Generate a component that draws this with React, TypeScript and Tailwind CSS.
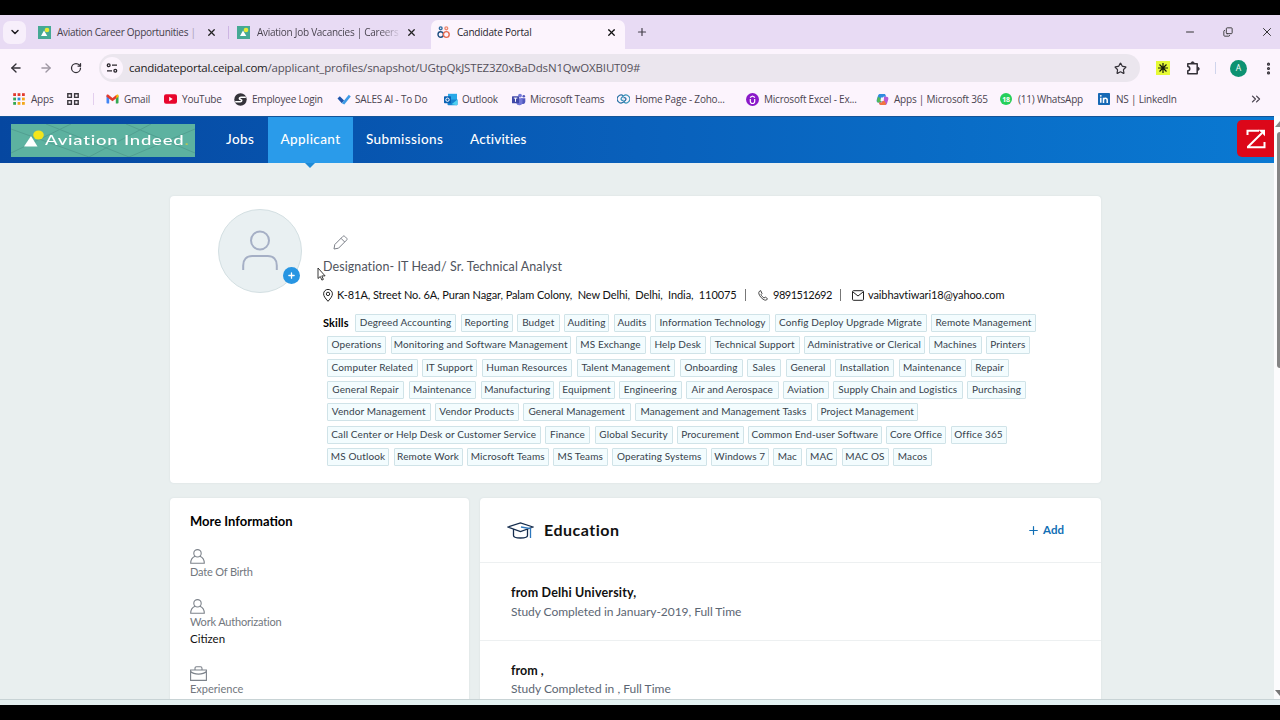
import type { ReactNode } from 'react';
import { ArrowLeft, ArrowRight, ChevronDown, ChevronsRight, Copy, Minus, MoreVertical, Plus, RotateCw, Star, X } from 'lucide-react';

interface Skill {
  name: string;
  width: number;
}

const skillRows: Skill[][] = [
  [
    { name: 'Degreed Accounting', width: 101 },
    { name: 'Reporting', width: 52 },
    { name: 'Budget', width: 42.5 },
    { name: 'Auditing', width: 45 },
    { name: 'Audits', width: 37 },
    { name: 'Information Technology', width: 115 },
    { name: 'Config Deploy Upgrade Migrate', width: 152 },
    { name: 'Remote Management', width: 105 },
  ],
  [
    { name: 'Operations', width: 59 },
    { name: 'Monitoring and Software Management', width: 180.5 },
    { name: 'MS Exchange', width: 70 },
    { name: 'Help Desk', width: 55.5 },
    { name: 'Technical Support', width: 89.5 },
    { name: 'Administrative or Clerical', width: 120.5 },
    { name: 'Machines', width: 52.5 },
    { name: 'Printers', width: 43.5 },
  ],
  [
    { name: 'Computer Related', width: 90.5 },
    { name: 'IT Support', width: 55 },
    { name: 'Human Resources', width: 90.5 },
    { name: 'Talent Management', width: 98.5 },
    { name: 'Onboarding', width: 63 },
    { name: 'Sales', width: 34 },
    { name: 'General', width: 45 },
    { name: 'Installation', width: 59 },
    { name: 'Maintenance', width: 67.5 },
    { name: 'Repair', width: 38 },
  ],
  [
    { name: 'General Repair', width: 77 },
    { name: 'Maintenance', width: 67.5 },
    { name: 'Manufacturing', width: 73.5 },
    { name: 'Equipment', width: 56 },
    { name: 'Engineering', width: 62.5 },
    { name: 'Air and Aerospace', width: 92.5 },
    { name: 'Aviation', width: 45.5 },
    { name: 'Supply Chain and Logistics', width: 129.5 },
    { name: 'Purchasing', width: 59 },
  ],
  [
    { name: 'Vendor Management', width: 103.5 },
    { name: 'Vendor Products', width: 83.5 },
    { name: 'General Management', width: 107.5 },
    { name: 'Management and Management Tasks', width: 177 },
    { name: 'Project Management', width: 101.5 },
  ],
  [
    { name: 'Call Center or Help Desk or Customer Service', width: 213.5 },
    { name: 'Finance', width: 45 },
    { name: 'Global Security', width: 78 },
    { name: 'Procurement', width: 66.5 },
    { name: 'Common End-user Software', width: 133.5 },
    { name: 'Core Office', width: 60 },
    { name: 'Office 365', width: 56 },
  ],
  [
    { name: 'MS Outlook', width: 62 },
    { name: 'Remote Work', width: 69 },
    { name: 'Microsoft Teams', width: 81.5 },
    { name: 'MS Teams', width: 54.5 },
    { name: 'Operating Systems', width: 94.5 },
    { name: 'Windows 7', width: 57.5 },
    { name: 'Mac', width: 28.5 },
    { name: 'MAC', width: 31 },
    { name: 'MAC OS', width: 47 },
    { name: 'Macos', width: 39 },
  ],
];

/* ---------- Browser icons ---------- */

function AviationFavicon() {
  return (
    <svg viewBox="0 0 13 13" className="size-[13px] shrink-0">
      <rect width="13" height="13" fill="#45a994" />
      <circle cx="9" cy="4" r="2.3" fill="#e6ea35" />
      <path d="M3 10 6 4.5 9.3 10Z" fill="#fff" />
    </svg>
  );
}

function CeipalFavicon() {
  return (
    <svg viewBox="0 0 13 13" className="size-[13px] shrink-0" fill="none" strokeWidth="1.4">
      <circle cx="3.7" cy="2.3" r="1.4" stroke="#2c6a9e" />
      <circle cx="3.7" cy="8.5" r="2.7" stroke="#1d4f80" />
      <circle cx="9.3" cy="2.3" r="1.4" stroke="#ee8a70" />
      <circle cx="9.3" cy="8.5" r="2.9" stroke="#e66a4e" />
    </svg>
  );
}

function TuneIcon() {
  return (
    <svg viewBox="0 0 12 12" className="size-3" fill="none" stroke="#28252b" strokeWidth="1.3">
      <circle cx="2.7" cy="3.2" r="1.4" />
      <path d="M6 3.2h5M1 8.8h5" />
      <circle cx="9.3" cy="8.8" r="1.4" />
    </svg>
  );
}

function ExtensionsIcon() {
  return (
    <svg viewBox="0 0 15 15" className="size-[15px]" fill="none" stroke="#333037" strokeWidth="1.5" strokeLinejoin="round">
      <path d="M1.8 2.8h9.4v9.900H1.800V9.800c2.600-.3 2.600-4 0-4.200Z" />
      <path d="M5 2.300a1.600 1.600 0 0 1 3.200 0ZM11.700 6.200a1.600 1.600 0 0 1 0 3.200Z" fill="#333037" strokeWidth=".8" />
    </svg>
  );
}

function AppsIcon() {
  const colors = ['#e23b2e', '#e23b2e', '#e23b2e', '#34a853', '#2f8fd8', '#f2a71b', '#34a853', '#f2a71b', '#f2a71b'];
  return (
    <svg viewBox="0 0 12 12" className="size-3">
      {colors.map((color, i) => (
        <rect key={i} x={(i % 3) * 4.4 + 0.2} y={Math.floor(i / 3) * 4.4 + 0.2} width="2.8" height="2.8" fill={color} />
      ))}
    </svg>
  );
}

function GridIcon() {
  return (
    <svg viewBox="0 0 12 12" className="size-3" fill="none" stroke="#3b383e" strokeWidth="1.4">
      <path d="M.8.8h3.6v3.6H.8zM7.6.8h3.6v3.6H7.6zM.8 7.6h3.6v3.6H.8zM7.6 7.6h3.6v3.6H7.6z" />
    </svg>
  );
}

function GmailIcon() {
  return (
    <svg viewBox="0 0 13 10" className="h-2.5 w-[13px]">
      <path d="M.5 1.5 3.2 3v6.5H1.3a.8.8 0 0 1-.8-.8Z" fill="#4285f4" />
      <path d="M12.5 1.5 9.8 3v6.5h1.900a.8.800 0 0 0 .8-.8Z" fill="#34a853" />
      <path d="M9.8 1.500 11 .6c.7-.5 1.500 0 1.500.9v1.200L9.800 4.700Z" fill="#fbbc04" />
      <path d="M.5 1.500C.5.600 1.400.100 2.100.600L6.500 3.900 10.300 1v3.300L6.500 7.200.5 2.700Z" fill="#e33b2e" />
    </svg>
  );
}

function YoutubeIcon() {
  return (
    <svg viewBox="0 0 13 10" className="h-2.5 w-[13px]">
      <rect width="13" height="9.6" y=".2" rx="2" fill="#e8062c" />
      <path d="m5.200 2.800 3.500 2.200-3.500 2.200Z" fill="#fff" />
    </svg>
  );
}

function EmployeeIcon() {
  return (
    <svg viewBox="0 0 13 13" className="size-[13px]">
      <circle cx="6.500" cy="6.500" r="6.200" fill="#35333a" />
      <path d="M11.800 4.300H7C5.200 4.300 4.700 6.200 6.500 6.500c1.900.3 1.700 2.300-.3 2.300H1.200" fill="none" stroke="#fff" strokeWidth="1.500" />
    </svg>
  );
}

function TodoIcon() {
  return (
    <svg viewBox="0 0 14 12" className="h-3 w-3.5">
      <path d="m.5 5.500 2.300-2.300 4.300 4.300-2.300 2.700Z" fill="#1f56ad" />
      <path d="m4.800 10.300 7-8.500 2 1.700-6.500 8Z" fill="#3d9be6" />
    </svg>
  );
}

function OutlookIcon() {
  return (
    <svg viewBox="0 0 14 13" className="h-[13px] w-3.5">
      <rect x="4" y=".8" width="9" height="6.500" fill="#28a8e8" />
      <path d="M3.500 6.500h10v4.800a.9.900 0 0 1-.9.900H4.400a.9.900 0 0 1-.9-.9Z" fill="#1684d0" />
      <path d="m13.500 6.500-6 4.800 5.300.9a.8.800 0 0 0 .7-.9Z" fill="#50d0f0" />
      <rect y="3.200" width="7" height="7" rx=".7" fill="#0b62b4" />
      <circle cx="3.500" cy="6.700" r="1.700" fill="none" stroke="#fff" strokeWidth="1" />
    </svg>
  );
}

function TeamsIcon() {
  return (
    <svg viewBox="0 0 14 13" className="h-[13px] w-3.5">
      <circle cx="8" cy="2.600" r="1.900" fill="#7278d8" />
      <circle cx="11.800" cy="3.300" r="1.300" fill="#5057bd" />
      <path d="M9 5.300h4.300v3.500a2.300 2.300 0 0 1-4.300 1Z" fill="#5057bd" />
      <path d="M4.200 5.300h6.300v4a3.200 3.200 0 0 1-6.300.6Z" fill="#7278d8" />
      <rect y="3.300" width="7" height="7" rx=".6" fill="#4048a8" />
      <path d="M1.800 5.100h3.500M3.500 5.100v3.700" stroke="#fff" />
    </svg>
  );
}

function ZohoIcon() {
  return (
    <svg viewBox="0 0 13 10" className="h-2.5 w-[13px]" fill="none" strokeWidth="1.200">
      <path d="M6.500 1.900A3.900 3.900 0 1 0 6.500 8.100L8.600 6a1.500 1.500 0 0 0-2.100-2.100" stroke="#276fa4" />
      <path d="M6.500 8.100A3.900 3.900 0 1 0 6.500 1.900L4.400 4a1.500 1.500 0 0 0 2.100 2.100" stroke="#3591b8" />
    </svg>
  );
}

function UdemyIcon() {
  return (
    <svg viewBox="0 0 13 13" className="size-[13px]">
      <circle cx="6.500" cy="6.500" r="6.500" fill="#8a18c9" />
      <path d="M4.300 6v2.300a2.200 2.200 0 0 0 4.400 0V6M4 4.600l2.500-1.500L9 4.600" fill="none" stroke="#fff" strokeWidth="1.200" />
    </svg>
  );
}

function CopilotIcon() {
  return (
    <svg viewBox="0 0 13 13" className="size-[13px]">
      <path d="M4.200 1h4c1 0 1.300.6 1.600 1.700l.3 1H7.200L5 9.500H2.500C.8 9.500.3 8.200.8 6.500l1.300-4C2.500 1.500 3 1 4.200 1Z" fill="#2f8be0" />
      <path d="M2 3.500 1 7.200c-.3 1.400.2 2.300 1.500 2.300H5l1-3Z" fill="#52b95a" />
      <path d="M8.800 12h-4c-1 0-1.300-.6-1.600-1.700l-.3-.8h2.900L8 3.700h2.500c1.700 0 2.200 1.300 1.700 3l-1.300 4C10.500 11.500 10 12 8.800 12Z" fill="#b65bd4" />
      <path d="M3 9.500h3l1.500-3 2.700 4.300c-.4.800-.8 1.200-1.600 1.200H4.800c-1.200 0-1.500-1-1.800-2.500Z" fill="#f1763f" />
      <path d="M5 4.500h3L7.700 8H4.500Z" fill="#fdf3fd" />
    </svg>
  );
}

function WhatsappIcon() {
  return (
    <div className="flex size-3 items-center justify-center rounded-full bg-[#25cf5b] text-[7px] font-bold leading-none text-white">
      18
    </div>
  );
}

function LinkedinIcon() {
  return (
    <svg viewBox="0 0 12 12" className="size-3">
      <rect width="12" height="12" rx=".8" fill="#1769b5" />
      <path d="M2.800 4.800v5M5.500 10V4.800M5.500 7.200c0-2.500 3.700-2.500 3.700 0V10" fill="none" stroke="#fff" strokeWidth="1.500" />
      <circle cx="2.800" cy="2.800" r=".9" fill="#fff" />
    </svg>
  );
}

/* ---------- Browser chrome ---------- */

function TabStrip() {
  return (
    <div className="flex h-[34px] shrink-0 items-center bg-[#e8dbf4] text-[10px] tracking-[-0.21px] text-[#45404b]">
      <button className="ml-[3px] flex size-[23px] items-center justify-center rounded-[7px] bg-[#f7effb]">
        <ChevronDown className="size-3 text-[#1d1b20]" strokeWidth={3} />
      </button>
      <div className="flex h-full w-[202px] items-center pl-3">
        <AviationFavicon />
        <span className="ml-[6px] w-[144px] whitespace-nowrap tracking-[-0.27px]">
          Aviation Career Opportunities <span className="text-[#a79fb2]">|</span>
        </span>
        <X className="ml-[5px] size-[11px] shrink-0 text-[#222]" strokeWidth={2.8} />
      </div>
      <div className="h-[13px] w-px bg-[#cdb5e3]" />
      <div className="flex h-full w-[202px] items-center pl-2">
        <AviationFavicon />
        <span className="ml-[7px] w-[144px] whitespace-nowrap bg-linear-to-r from-[#45404b] from-85% to-transparent bg-clip-text tracking-[-0.27px] text-transparent">
          Aviation Job Vacancies | Careers
        </span>
        <X className="ml-[5px] size-[11px] shrink-0 text-[#222]" strokeWidth={2.8} />
      </div>
      <div className="mt-[5px] flex h-[29px] w-[194px] items-center rounded-t-[7px] bg-[#fcf4fd] pb-[5px] pl-[6px] text-[#27242b]">
        <CeipalFavicon />
        <span className="ml-[7px] w-[149px]">Candidate Portal</span>
        <X className="size-[11px] text-[#111]" strokeWidth={2.8} />
      </div>
      <Plus className="ml-[11px] size-3" strokeWidth={2.4} />
      <div className="ml-auto flex items-center gap-[27px] pr-[6px] text-[#333]">
        <Minus className="size-[12px]" strokeWidth={2} />
        <Copy className="size-[10px] -scale-x-100 rotate-180" strokeWidth={2.2} />
        <X className="size-[14px]" strokeWidth={1.7} />
      </div>
    </div>
  );
}

function AddressBar() {
  return (
    <div className="flex h-[38px] shrink-0 items-center bg-[#fcf4fd] text-[#333037]">
      <ArrowLeft className="ml-[9px] size-[14px]" strokeWidth={2.3} />
      <ArrowRight className="ml-[16px] size-[14px] text-[#9e97a3]" strokeWidth={2.3} />
      <RotateCw className="ml-[17px] size-[12px]" strokeWidth={2.5} />
      <div className="ml-[17px] flex h-7 w-[1041px] items-center rounded-full bg-[#ebe6ee] pl-[2px]">
        <div className="flex size-[22px] items-center justify-center rounded-full bg-[#fcf4fd]">
          <TuneIcon />
        </div>
        <span className="ml-[6px] text-[11.5px] tracking-[-0.17px] text-[#55515b]">
          <span className="tracking-[-0.26px] text-[#1e1c22]">candidateportal.ceipal.com</span>
          /applicant_profiles/snapshot/UGtpQkJSTEZ3Z0xBaDdsN1QwOXBIUT09#
        </span>
        <Star className="ml-auto mr-[13px] size-[13px]" strokeWidth={2.2} />
      </div>
      <div className="ml-[16px] flex size-[14px] items-center justify-center bg-[#e6fa35]">
        <svg viewBox="0 0 12 12" className="size-3" stroke="#161a0c" strokeWidth="1.2">
          <path d="M6 1v10M1 6h10M2.500 2.500l7 7M9.500 2.500l-7 7" />
        </svg>
      </div>
      <div className="ml-[16px]">
        <ExtensionsIcon />
      </div>
      <div className="ml-[14px] h-3 w-px bg-[#cfd4ec]" />
      <div className="ml-[14px] flex size-[17px] items-center justify-center rounded-full bg-[#0d9272] text-[8.5px] text-white">A</div>
      <MoreVertical className="ml-[14px] size-[15px]" strokeWidth={3} />
    </div>
  );
}

function Bookmark({ icon, label, className }: { icon: ReactNode; label: string; className: string }) {
  return (
    <div className={`flex shrink-0 items-center whitespace-nowrap ${className}`}>
      <div className="flex w-[18px] shrink-0">{icon}</div>
      {label}
    </div>
  );
}

function BookmarksBar() {
  return (
    <div className="flex h-[29px] shrink-0 items-center bg-[#fcf4fd] pb-[5px] pl-[13px] text-[10px] tracking-[-0.21px] text-[#4a4450]">
      <Bookmark icon={<AppsIcon />} label="Apps" className="w-[54px]" />
      <GridIcon />
      <div className="ml-[14px] mr-[12px] h-3 w-px bg-[#e3cfee]" />
      <Bookmark icon={<GmailIcon />} label="Gmail" className="w-[58px]" />
      <Bookmark icon={<YoutubeIcon />} label="YouTube" className="w-[70px]" />
      <Bookmark icon={<EmployeeIcon />} label="Employee Login" className="w-[103px]" />
      <Bookmark icon={<TodoIcon />} label="SALES AI - To Do" className="w-[107px]" />
      <Bookmark icon={<OutlookIcon />} label="Outlook" className="w-[68px]" />
      <Bookmark icon={<TeamsIcon />} label="Microsoft Teams" className="w-[105px]" />
      <Bookmark icon={<ZohoIcon />} label="Home Page - Zoho..." className="w-[129px]" />
      <Bookmark icon={<UdemyIcon />} label="Microsoft Excel - Ex..." className="w-[130px]" />
      <Bookmark icon={<CopilotIcon />} label="Apps | Microsoft 365" className="w-[124px]" />
      <Bookmark icon={<WhatsappIcon />} label="(11) WhatsApp" className="w-[98px]" />
      <Bookmark icon={<LinkedinIcon />} label="NS | LinkedIn" className="w-[151px]" />
      <ChevronsRight className="size-3.5" strokeWidth={2.2} />
    </div>
  );
}

/* ---------- Portal ---------- */

function NavBar() {
  return (
    <nav className="flex h-[47px] shrink-0 items-center border-t border-[#145498] bg-linear-to-r from-[#0647a0] via-[#0960bb] to-[#0a79d2] text-[13.5px] font-medium tracking-[0.4px] text-white">
      <div className="relative ml-[11px] flex h-[33px] w-[184px] items-center overflow-hidden bg-[#5db2a0]">
        <svg viewBox="0 0 184 33" className="absolute inset-0 size-full" fill="none" stroke="#529f91">
          <path d="M0 5 78 33 140 0M35 0 118 33 184 5M0 29 60 0M115 0 184 29" />
        </svg>
        <svg viewBox="0 0 24 18" className="relative mb-[3px] ml-[12px] h-[18px] w-6 shrink-0">
          <ellipse cx="15.500" cy="5" rx="5.300" ry="4.500" fill="#f3e51c" />
          <path d="M1 16.500 8 6l6.500 10.500Z" fill="#fff" />
        </svg>
        <span className="relative mb-px ml-[-2px] origin-left scale-x-[1.32] whitespace-nowrap text-[14px] tracking-[0.6px]">
          Aviation Indeed<span className="text-[#b9c65a]">.</span>
        </span>
      </div>
      <a className="mb-[2px] ml-[31px] w-[42px]">Jobs</a>
      <a className="relative flex h-full w-[85px] items-center justify-center bg-[#2a9bea] pb-[2px]">
        Applicant
        <span className="absolute left-[37px] top-full border-x-[5px] border-t-[5px] border-x-transparent border-t-[#1e8ad6]" />
      </a>
      <a className="mb-[2px] ml-[13px] w-[104px]">Submissions</a>
      <a className="mb-[2px] tracking-[0.15px]">Activities</a>
      <div className="mb-[3px] ml-auto flex h-[37px] w-[37px] items-center justify-center rounded-l-[5px] bg-[#dc0719]">
        <svg viewBox="0 0 20 20" className="size-5" fill="none" stroke="#fff" strokeWidth="2">
          <path d="M1.500 6V1.700H13M1.500 18.300 16 4M18.500 13v5.300H1" />
          <path d="M12.500.700H19v6.500Z" fill="#fff" stroke="none" />
        </svg>
      </div>
    </nav>
  );
}

function ProfileCard() {
  return (
    <section className="relative flex h-[287px] shrink-0 rounded-[4px] bg-white shadow-[0_0_2px_#d3dcde]">
      <div className="relative ml-[48px] mt-[13px] flex size-[84px] shrink-0 items-center justify-center rounded-full border border-[#d3dfe2] bg-[#e9f0f2]">
        <svg viewBox="0 0 36 42" className="h-[42px] w-9" fill="none" stroke="#a5afc5" strokeWidth="2">
          <circle cx="18" cy="10.500" r="9" />
          <path d="M1.200 40v-4.500c0-6 3.500-9.500 9-9.500h15.600c5.500 0 9 3.500 9 9.500V40" />
        </svg>
        <div className="absolute bottom-[8px] right-[1px] flex size-[17px] items-center justify-center rounded-full bg-[#2795e2] text-white">
          <Plus className="size-[9px]" strokeWidth={3.5} />
        </div>
      </div>
      <div className="ml-[21px] flex flex-col">
        <svg viewBox="0 0 15 15" className="ml-[10px] mt-[39px] size-[15px]" fill="none" stroke="#7c8089">
          <path d="M1 14l.8-4.500L9.900 1.400c.6-.6 1.300-.6 1.900 0l1.800 1.800c.6.600.6 1.300 0 1.900L5.500 13.200ZM8 3.300l3.700 3.700" />
        </svg>
        <p className="mt-[8px] h-[18px] text-[12.5px] leading-[18px] tracking-[0.08px] text-[#4f545d]">
          Designation- IT Head/ Sr. Technical Analyst
        </p>
        <div className="mt-[11px] flex h-4 items-center whitespace-pre text-[11px] tracking-[-0.1px] text-[#111]">
          <svg viewBox="0 0 10 13" className="mr-1 h-[13px] w-2.5" fill="none" stroke="#222">
            <path d="M5 12.300C2 9 .6 7 .6 4.800a4.400 4.400 0 0 1 8.800 0C9.400 7 8 9 5 12.300Z" />
            <circle cx="5" cy="4.900" r="1.700" />
          </svg>
          <span className="w-[400px]">K-81A, Street No. 6A, Puran Nagar, Palam Colony,  New Delhi,  Delhi,  India,  110075</span>
          <div className="ml-[8px] h-3 w-px bg-[#777]" />
          <svg viewBox="0 0 10 11" className="ml-[12px] h-[11px] w-2.5" fill="none" stroke="#333" strokeWidth=".9">
            <path d="M2.700.6 1.200 1.500C.3 2.500.7 5 3.200 7.600c2.500 2.600 4.500 3 5.500 2.200l.8-1.100-2.200-1.600-1.200.8C5 7.500 3.400 5.700 3 4.700l1-1.100Z" />
          </svg>
          <span className="ml-[5px] w-[59px] tracking-[-0.5px]">9891512692</span>
          <div className="ml-[8px] h-3 w-px bg-[#777]" />
          <svg viewBox="0 0 12 11" className="ml-[11px] h-[11px] w-3" fill="none" stroke="#222">
            <rect x=".5" y=".7" width="11" height="9.600" rx="1" />
            <path d="m1 2 5 4 5-4" />
          </svg>
          <span className="ml-[4px]">vaibhavtiwari18@yahoo.com</span>
        </div>
        <div className="mt-[11px] flex flex-col gap-[4.35px] text-[10px] tracking-[0.12px] text-[#36424c]">
          {skillRows.map((row, i) => (
            <div key={i} className="flex h-[18px] items-center gap-[4.5px] whitespace-nowrap">
              {i === 0 ? <b className="w-[27.5px] text-[11px] text-black">Skills</b> : <span className="-mr-[0.5px] w-0" />}
              {row.map((skill) => (
                <span
                  key={skill.name}
                  className="flex h-[18px] shrink-0 items-center justify-center rounded-[1px] border border-[#d0e3e8] bg-[#f3fcfe] pb-px"
                  style={{ width: skill.width }}
                >
                  {skill.name}
                </span>
              ))}
            </div>
          ))}
        </div>
      </div>
      {/* Mouse pointer */}
      <svg viewBox="0 0 9 14" className="absolute left-[147px] top-[71px] h-3.5 w-[9px]" fill="#fff" stroke="#222" strokeWidth=".9">
        <path d="M1 1v10.500l2.300-2 1.600 3.600 1.500-.7-1.600-3.500h3.300Z" />
      </svg>
    </section>
  );
}

function PersonIcon() {
  return (
    <svg viewBox="0 0 15 15" className="size-[15px]" fill="none" stroke="#7d838b" strokeWidth="1.1">
      <circle cx="7.500" cy="4.300" r="3.700" />
      <path d="M5 7.300C2 8.500.7 11 .7 14.300h13.600C14.300 11 13 8.500 10 7.300" />
    </svg>
  );
}

function InfoCard() {
  return (
    <section className="flex w-[299px] shrink-0 flex-col rounded-t-[4px] bg-white pl-5 text-[11px] leading-[16px] tracking-[-0.18px] text-[#72777e] shadow-[0_0_2px_#d3dcde]">
      <h2 className="mt-[14px] text-[13px] font-bold leading-[18px] tracking-normal text-black">More Information</h2>
      <div className="mt-[19px]">
        <PersonIcon />
        <p>Date Of Birth</p>
      </div>
      <div className="mt-[19px]">
        <PersonIcon />
        <p>Work Authorization</p>
        <p className="mt-px text-[11.5px] tracking-normal text-[#111]">Citizen</p>
      </div>
      <div className="mt-[19px]">
        <svg viewBox="0 0 17 15" className="h-[15px] w-[17px]" fill="none" stroke="#7d838b" strokeWidth="1.1">
          <path d="M.6 4h15.800v10.400H.6ZM5 4V2.500C5 1.300 5.500.7 6.500.7h4c1 0 1.500.6 1.500 1.800V4M.6 5.500C4 9 13 9 16.400 5.500" />
        </svg>
        <p className="tracking-normal">Experience</p>
      </div>
    </section>
  );
}

function EducationCard() {
  return (
    <section className="flex flex-1 flex-col rounded-t-[4px] bg-white text-[12px] shadow-[0_0_2px_#d3dcde]">
      <div className="flex h-[65px] shrink-0 items-center border-b border-[#edf0f1] pl-[27px] pr-[37px]">
        <svg viewBox="0 0 27 17" className="h-[17px] w-[27px]" fill="none" stroke="#142c4d" strokeWidth="1.3">
          <path d="M1 5 13.500 1 26 5l-12.500 4.500ZM6.500 7.500v6c0 1.400 3 2.500 7 2.500s7-1.100 7-2.500v-6" />
          <path d="m14 5 9.500 1.500V16" stroke="#2d77bd" />
        </svg>
        <h2 className="ml-[10px] text-[16px] font-bold tracking-[0.5px] text-[#111]">Education</h2>
        <button className="ml-auto flex items-center gap-[3px] text-[11.5px] font-bold text-[#126fb5]">
          <Plus className="size-[13px]" strokeWidth={2.2} />
          Add
        </button>
      </div>
      <div className="h-[78px] shrink-0 border-b border-[#edf0f1] pl-[31px] pt-[20px] text-[#5c6673]">
        <p className="text-[12.5px] font-bold leading-[20px] tracking-[0.18px] text-[#111]">from Delhi University,</p>
        <p className="leading-[18px] tracking-[-0.05px]">Study Completed in January-2019, Full Time</p>
      </div>
      <div className="pl-[31px] pt-[20px] text-[#5c6673]">
        <p className="text-[12.5px] font-bold leading-[20px] text-[#111]">from ,</p>
        <p className="leading-[16px]">Study Completed in , Full Time</p>
      </div>
    </section>
  );
}

export default function App() {
  return (
    <div className="flex h-[720px] w-[1280px] flex-col overflow-hidden bg-black py-[15px] font-['Open_Sans',sans-serif]">
      <TabStrip />
      <AddressBar />
      <BookmarksBar />
      <div className="flex h-[583px] shrink-0 bg-[#fcfcfd] font-['Lato',sans-serif]">
        <div className="flex w-[1274px] shrink-0 flex-col overflow-hidden bg-[#e9efef]">
          <NavBar />
          <main className="flex flex-1 flex-col gap-[15px] overflow-hidden pl-[170px] pr-[173px] pt-[33px]">
            <ProfileCard />
            <div className="flex h-[220px] shrink-0 gap-[11px]">
              <InfoCard />
              <EducationCard />
            </div>
          </main>
        </div>
        <div className="flex w-1.5 flex-col items-end justify-between overflow-hidden">
          <div className="mt-[5px] size-0 border-b-[6px] border-l-[5px] border-b-[#888] border-l-transparent" />
          <div className="mb-auto mt-[5px] h-[236px] w-[3px] rounded-l-[3px] bg-[#858585]" />
          <div className="mb-[3px] size-0 border-l-[5px] border-t-[6px] border-l-transparent border-t-[#777]" />
        </div>
      </div>
      <div className="h-[6px] shrink-0 border-t border-[#c8d3d5] bg-linear-to-r from-[#e3eeee] via-[#e3f2f1] to-[#e2eff2]" />
    </div>
  );
}
